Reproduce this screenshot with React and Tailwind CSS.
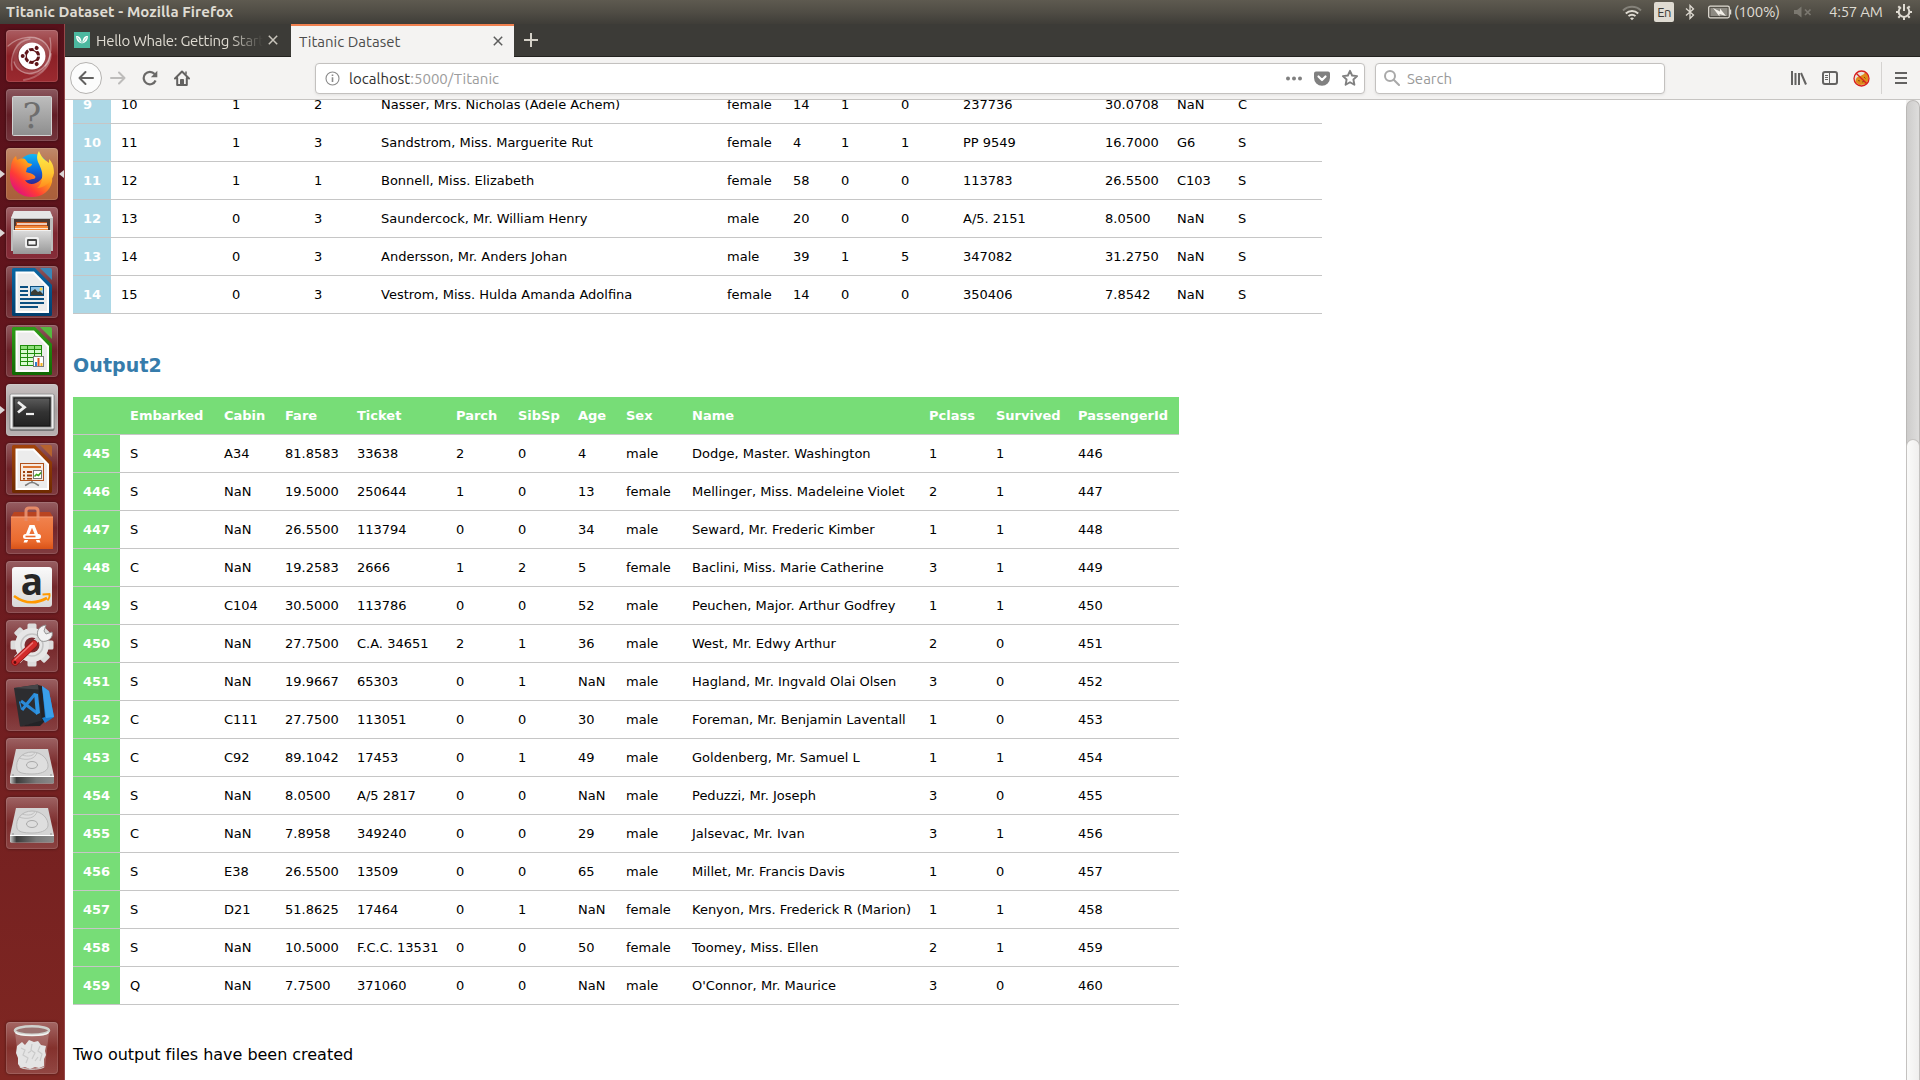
import React from "react";

const UI = "font-['Ubuntu','Noto_Sans',sans-serif]";

/* ---------- launcher icons (52 x 52 tiles) ---------- */

const UbuntuIcon = () => (
  <svg viewBox="0 0 52 52" className="size-full">
    <g fill="none" stroke="#fff" strokeLinecap="round">
      <path d="M2 16C13 6 30 4 39 13c7 7 6 17 0 23" strokeOpacity=".35" strokeWidth="1.3" />
      <path d="M6 40C4 26 9 11 24 9" strokeOpacity=".3" strokeWidth="1.5" />
      <path d="M44 8c3 16-2 32-17 35-8 2-17-3-19-11" strokeOpacity=".35" strokeWidth="1.3" />
      <path d="M18 50c14-2 26-12 27-26" strokeOpacity=".25" strokeWidth="2" />
    </g>
    <circle cx="26" cy="26" r="19" fill="#fff" fillOpacity=".14" />
    <circle cx="25.5" cy="26.5" r="14" fill="#400" fillOpacity=".35" />
    <circle cx="26" cy="26" r="13.5" fill="#fff" />
    <circle cx="26" cy="26" r="6.6" fill="none" stroke="#5e1418" strokeWidth="3" />
    {[60, 180, 300].map((a) => (
      <g key={a} transform={`rotate(${a} 26 26)`}>
        <circle cx="35.3" cy="26" r="3.1" fill="#fff" />
        <circle cx="35.3" cy="26" r="2" fill="#5e1418" />
      </g>
    ))}
    {[0, 120, 240].map((a) => (
      <path key={a} transform={`rotate(${a} 26 26)`} d="M30 26h6" stroke="#fff" strokeWidth="1.2" />
    ))}
  </svg>
);

const UnknownIcon = () => (
  <svg viewBox="0 0 52 52" className="size-full">
    <defs>
      <linearGradient id="unk" x1="0" y1="0" x2="0" y2="1">
        <stop offset="0" stopColor="#bdbdbd" />
        <stop offset="1" stopColor="#8e8e8e" />
      </linearGradient>
    </defs>
    <rect x="6.5" y="7.5" width="39" height="39" rx="1" fill="url(#unk)" stroke="#d2d2d2" />
    <text x="26" y="39" textAnchor="middle" fontSize="35" fill="#6e6e6e" className="font-['DejaVu_Serif',serif]">?</text>
  </svg>
);

const FirefoxIcon = () => (
  <svg viewBox="0 0 52 52" className="size-full">
    <defs>
      <linearGradient id="ffa" x1=".85" y1=".1" x2=".15" y2=".9">
        <stop offset="0" stopColor="#ffe83c" />
        <stop offset=".35" stopColor="#ff9a1a" />
        <stop offset=".7" stopColor="#ff3b36" />
        <stop offset="1" stopColor="#e0117f" />
      </linearGradient>
      <linearGradient id="ffb" x1=".5" y1="0" x2=".5" y2="1">
        <stop offset="0" stopColor="#12b9f5" />
        <stop offset=".5" stopColor="#0a6be0" />
        <stop offset="1" stopColor="#3a1b86" />
      </linearGradient>
      <linearGradient id="ffc" x1=".5" y1="0" x2=".5" y2="1">
        <stop offset="0" stopColor="#fff04a" />
        <stop offset=".6" stopColor="#ffc531" />
        <stop offset="1" stopColor="#ff8a1c" />
      </linearGradient>
    </defs>
    <circle cx="27" cy="22" r="16" fill="url(#ffb)" />
    <path d="M5 20c0-5 2-10 5-12l1 4c2-1 5-2 8-1l3 4 4 1c0 2-3 3-5 4l-1 4c3 1 6 1 9 4 1 1 0 3-2 3-3 0-4 2-8 1 2 4 7 5 11 3 7-3 10-10 7-18 7 4 10 12 9 17-2 9-10 15-20 15C12 49 3 38 4 27c0-3 0-5 1-7z" fill="url(#ffa)" />
    <path d="M33 3c-3 5-2 9 0 13 2 5 4 8 3 14 0 4-2 8-5 10 8 0 16-7 17-15 0-7-2-11-5-14l0 4c-4-3-8-6-10-12z" fill="url(#ffc)" />
  </svg>
);

const FilesIcon = () => (
  <svg viewBox="0 0 52 52" className="size-full">
    <defs>
      <linearGradient id="cab" x1="0" y1="0" x2="0" y2="1">
        <stop offset="0" stopColor="#dcdcdc" />
        <stop offset="1" stopColor="#989898" />
      </linearGradient>
    </defs>
    <path d="M8 4h36l3 7v33H5V11z" fill="#bdbdbd" />
    <path d="M8 4h36l3 7H5z" fill="#e6e6e6" />
    <path d="M8 12h36v11H8z" fill="#4a3a34" />
    <path d="M10 15h31v8H10z" fill="#c8571a" />
    <path d="M9 19h33v5H9z" fill="#f28a3a" />
    <path d="M11 17h30" stroke="#fff" strokeWidth="1.4" />
    <path d="M9 21.5h33" stroke="#ffe6cf" strokeWidth="1.2" />
    <path d="M7 23h38v24H7z" fill="url(#cab)" />
    <path d="M7 23.5h38" stroke="#f0f0f0" />
    <rect x="19" y="30" width="14" height="11" rx="2" fill="#f0f0f0" />
    <rect x="21" y="32" width="10" height="7" rx="1.2" fill="#444" />
    <rect x="22.5" y="34" width="7" height="3.5" fill="#f4f4f4" />
  </svg>
);

const DocIcon = ({ dark, mid, light, id, children }) => (
  <svg viewBox="0 0 52 52" className="size-full">
    <defs>
      <linearGradient id={id} x1="0" y1="0" x2="0" y2="1">
        <stop offset="0" stopColor={mid} />
        <stop offset="1" stopColor={dark} />
      </linearGradient>
    </defs>
    <path d="M7.500 2H29L46 19v29.500a1.500 1.500 0 0 1-1.500 1.500h-37A1.500 1.500 0 0 1 6 48.500v-45A1.500 1.500 0 0 1 7.500 2z" fill={`url(#${id})`} />
    <path d="M9.500 5.500H28L43 21v26H9.500z" fill="#fff" />
    <path d="M11.500 7.500H27L41 22v23H11.500z" fill="#ececec" />
    <path d="M34 2h10a2 2 0 0 1 2 2v10z" fill={light} />
    {children}
  </svg>
);

const WriterIcon = () => (
  <DocIcon id="wr" dark="#013e6d" mid="#0a67a3" light="#3b86b5">
    <g fill="#0b4f80">
      <path d="M14 20h8v2h-8zM14 24h8v2h-8zM14 28h8v2h-8zM14 32h24v2H14zM14 36h24v2H14zM14 40h18v2H14z" />
      <rect x="24" y="20" width="14" height="10" />
    </g>
    <rect x="25" y="21" width="12" height="8" fill="#8ec3e6" />
    <path d="M25 29v-3l4-3 3 3 2-1 3 3v1z" fill="#3c3c34" />
    <circle cx="35" cy="23" r="1.5" fill="#ffd33c" />
  </DocIcon>
);

const CalcIcon = () => (
  <DocIcon id="ca" dark="#106802" mid="#2f9c18" light="#55b83f">
    <rect x="14" y="20" width="22" height="21" fill="#1e8c0c" />
    {[0, 1, 2, 3, 4].map((r) =>
      [0, 1, 2].map((c) => (
        <rect key={`${r}-${c}`} x={15 + c * 7} y={21 + r * 4} width="6" height="3" fill={r === 0 ? "#8fe07c" : "#d8fbd0"} />
      ))
    )}
    <rect x="27.500" y="31.500" width="10" height="10" fill="#fff" stroke="#7a7a7a" />
    <path d="M29 37h2v4h-2z" fill="#2f7fd0" />
    <path d="M31.500 33h2v8h-2z" fill="#e2571c" />
    <path d="M34.500 38h2v3h-2z" fill="#f3b21b" />
  </DocIcon>
);

const ImpressIcon = () => (
  <DocIcon id="im" dark="#6e2a00" mid="#a3430b" light="#b5622f">
    <rect x="14.500" y="20.500" width="23" height="17" fill="#f7e9df" stroke="#b0511b" />
    <path d="M17 23h18v2H17z" fill="#d9722f" />
    <path d="M17 28h2v2h-2zM17 31.500h2v2h-2zM17 35h2v1.500h-2zM21 28h5v2h-5zM21 31.500h5v2h-5zM21 35h5v1.500h-5z" fill="#9c3f0c" />
    <rect x="27.500" y="27.500" width="8" height="8" fill="#fff" stroke="#777" />
    <path d="M28.500 33.500l2-2 2 1 2.500-3" stroke="#3aa51d" strokeWidth="1.500" fill="none" />
    <path d="M26 38v2M19 42.500c3-1 3-3 7-3s4 2 7 3" stroke="#7d7d7d" strokeWidth="1.600" fill="none" />
  </DocIcon>
);

const TerminalIcon = () => (
  <svg viewBox="0 0 52 52" className="size-full">
    <defs>
      <linearGradient id="term" x1="0" y1="0" x2="0" y2="1">
        <stop offset="0" stopColor="#5a5a5a" />
        <stop offset=".5" stopColor="#333" />
        <stop offset="1" stopColor="#232323" />
      </linearGradient>
    </defs>
    <rect x="3.500" y="10" width="45" height="37" rx="2" fill="#777" />
    <rect x="4" y="10" width="44" height="35" rx="1.500" fill="#f0f0f0" stroke="#999" />
    <rect x="7" y="13" width="38" height="30" fill="#111" stroke="#777" />
    <rect x="8.500" y="14.500" width="35" height="27" fill="url(#term)" />
    <path d="M12 18l6.500 5.200L12 28.500" fill="none" stroke="#eee" strokeWidth="2.800" />
    <path d="M20 30h8" stroke="#eee" strokeWidth="2.200" />
  </svg>
);

const SoftwareIcon = () => (
  <svg viewBox="0 0 52 52" className="size-full">
    <defs>
      <linearGradient id="bag" x1="0" y1="0" x2="0" y2="1">
        <stop offset="0" stopColor="#f0824e" />
        <stop offset=".75" stopColor="#ea6a2e" />
        <stop offset="1" stopColor="#d95318" />
      </linearGradient>
    </defs>
    <path d="M8 10h36l3 5H5z" fill="#b94420" />
    <path d="M5 15h42v32H5z" fill="url(#bag)" />
    <path d="M20 19V9q0-3 3-3h6q3 0 3 3v10" fill="none" stroke="#e58a68" strokeWidth="3" />
    <path d="M5 15h42" stroke="#f5a07a" />
    <path d="M23.500 23h5l3.500 9h-3.400L26 25.800 23.400 32H20zM18.500 38h3.600l-1 2.500h-3.600zM30 38h3.500l1 2.500h-3.600z" fill="#fff" />
    <rect x="17" y="32" width="18" height="5" rx="2.500" fill="#fff" />
    <path d="M19.500 34.500h10" stroke="#ea6a2e" strokeWidth="1.600" />
  </svg>
);

const AmazonIcon = () => (
  <svg viewBox="0 0 52 52" className="size-full">
    <defs>
      <linearGradient id="amz" x1="0" y1="0" x2="0" y2="1">
        <stop offset="0" stopColor="#fafafa" />
        <stop offset="1" stopColor="#d9d9d9" />
      </linearGradient>
    </defs>
    <rect x="6" y="6" width="40" height="40" rx="3" fill="url(#amz)" />
    <text x="26" y="33.500" textAnchor="middle" fontSize="37" fontWeight="700" fill="#262626" className="font-['Open_Sans',sans-serif]">a</text>
    <path d="M8 35c11 8 23 7.500 33 2" fill="none" stroke="#f90" strokeWidth="2.600" />
    <path d="M36.500 33.500l7-.5c.5 2-.8 5-2 6.500" fill="none" stroke="#f90" strokeWidth="1.800" />
  </svg>
);

const SettingsIcon = () => (
  <svg viewBox="0 0 52 52" className="size-full">
    {[0, 45, 90, 135].map((a) => (
      <rect key={a} x="21.500" y="3.500" width="9" height="43" rx="1.500" fill="#dcdcdc" transform={`rotate(${a} 26 25)`} />
    ))}
    <circle cx="26" cy="25" r="17" fill="#e6e6e6" />
    <circle cx="26" cy="25" r="11" fill="none" stroke="#c4c4c4" strokeWidth="1.500" />
    <circle cx="26" cy="25" r="7.500" fill="#7c2c30" />
    <path d="M29 22l7-7" stroke="#d6d6d6" strokeWidth="5" />
    <path d="M32 17c-2-6 1-11 8-12l-2 6 2 3 6-2c2 5-4 11-11 9z" fill="#f2f2f2" stroke="#8d8d8d" strokeWidth=".9" />
    <path d="M9 42l19-18" stroke="#8e1515" strokeWidth="7.500" strokeLinecap="round" />
    <path d="M9 42l19-18" stroke="#d22c2c" strokeWidth="6" strokeLinecap="round" />
    <path d="M9 39.500l17.500-16.500" stroke="#ef7b7b" strokeWidth="1.400" strokeLinecap="round" />
    <circle cx="9" cy="42.500" r="1.400" fill="#5c0c0c" />
  </svg>
);

const CodeIcon = () => (
  <svg viewBox="0 0 52 52" className="size-full">
    <path d="M8 9l24-3.500 6 36.500-24 5.500z" fill="#2d2d30" />
    <path d="M8 9l24-3.500 1 5z" fill="#454548" />
    <path d="M32 6l4 1 6 32-8 8-20 .5 22-6z" fill="#232326" />
    <path d="M36 7l7 5 5 26-9 6-3-5 3-1z" fill="#1b7fd0" />
    <path d="M36 7l4 32 8-1-5-26z" fill="#3ba0ea" />
    <path d="M15 22l16 12M16 31l13-16" stroke="#2a8ad8" strokeWidth="3" />
    <path d="M28 14l4 1 2 19-4 2z" fill="#2f95e2" />
    <path d="M13.500 22.500l2 8" stroke="#2a8ad8" strokeWidth="1.200" />
  </svg>
);

const DiskIcon = ({ id }) => (
  <svg viewBox="0 0 52 52" className="size-full">
    <defs>
      <linearGradient id={id} x1="0" y1="0" x2="1" y2="0">
        <stop offset="0" stopColor="#c9c9c9" />
        <stop offset=".15" stopColor="#3a3a3a" />
        <stop offset=".6" stopColor="#777" />
        <stop offset="1" stopColor="#8a8a8a" />
      </linearGradient>
    </defs>
    <path d="M10 11h32l6 27v6a1.500 1.500 0 0 1-1.500 1.500h-41A1.500 1.500 0 0 1 4 44v-6z" fill="#d4d4d4" />
    <path d="M4 38.500h44V44a1.500 1.500 0 0 1-1.500 1.500h-41A1.500 1.500 0 0 1 4 44z" fill={`url(#${id})`} />
    <path d="M4 38.500h44" stroke="#fff" />
    <path d="M11 31c-2-9 5-17 15-17s17 8 16 15c-1 5-8 7-16 7s-14-1-15-5z" fill="#dedede" stroke="#b8b8b8" />
    <path d="M16 17c6 2 12 1 13-3M13 20c8 3 17 1 18-6" stroke="#c0c0c0" fill="none" />
    <ellipse cx="26" cy="27" rx="5.500" ry="3.500" fill="#dedede" stroke="#a8a8a8" />
    <circle cx="7" cy="37" r=".8" fill="#888" />
    <circle cx="45" cy="37" r=".8" fill="#888" />
  </svg>
);

const TrashIcon = () => (
  <svg viewBox="0 0 52 52" className="size-full">
    <path d="M9 10l4 35c1 3 25 3 26 0l4-35z" fill="#fff" fillOpacity=".2" />
    <path d="M11 24l5-4 3 3 4-5 5 2 4-1 3 4 5 1-1 5 1 4-2 4v7l-5 2-4-1-5 2-5-2-4 1-3-4v-6l-2-5z" fill="#e4e4e4" />
    <path d="M15 26l4 2-2 5 5 3-2 5M26 22l-1 6 4 3-3 6M34 24l-2 5 4 3-2 7M22 31l3-2M29 39l3-4" stroke="#cacaca" strokeWidth="1.200" fill="none" />
    <path d="M14 45c4 3 20 3 24 0" stroke="#d5d5d5" fill="none" />
    <ellipse cx="26" cy="8.500" rx="17" ry="4.200" fill="#9b7371" stroke="#cfd1cd" strokeWidth="2.600" />
    <path d="M9.500 10.500c4 4 29 4 33 0" stroke="#f4f4f2" strokeWidth="1.400" fill="none" />
  </svg>
);

const LAUNCHER = [
  { icon: <UbuntuIcon />, tile: "bg-gradient-to-b from-[#ab5d62] via-[#8c2026] to-[#9b2a30]" },
  { icon: <UnknownIcon /> },
  { icon: <FirefoxIcon />, tile: "bg-gradient-to-b from-[#c08a6c] via-[#b3663c] to-[#a95f3c]", run: true, focus: true },
  { icon: <FilesIcon />, tile: "bg-gradient-to-b from-[#a1656b] via-[#7d2731] to-[#862c38]", run: true },
  { icon: <WriterIcon /> },
  { icon: <CalcIcon /> },
  { icon: <TerminalIcon />, tile: "bg-gradient-to-b from-[#c9c2c2] via-[#a8a0a0] to-[#b9b2b2]", run: true },
  { icon: <ImpressIcon /> },
  { icon: <SoftwareIcon /> },
  { icon: <AmazonIcon /> },
  { icon: <SettingsIcon /> },
  { icon: <CodeIcon /> },
  { icon: <DiskIcon id="disk1" /> },
  { icon: <DiskIcon id="disk2" /> },
];

const Tile = ({ item }) => (
  <div className="relative h-[52px] w-16 shrink-0 px-1.5">
    {item.run && (
      <span className="absolute left-0 top-[22px] size-0 border-y-4 border-l-[5px] border-y-transparent border-l-[#dcd6d6]" />
    )}
    {item.focus && (
      <span className="absolute right-0 top-[22px] size-0 border-y-4 border-r-[5px] border-y-transparent border-r-[#dcd6d6]" />
    )}
    <div
      className={`size-[52px] rounded-[4px] shadow-[0_0_3px_rgba(0,0,0,0.45),inset_0_0_0_1px_rgba(255,255,255,0.12)] ${
        item.tile || "bg-gradient-to-b from-white/30 via-white/5 to-white/15"
      }`}
    >
      {item.icon}
    </div>
  </div>
);

const Launcher = () => (
  <aside className="flex w-[65px] shrink-0 flex-col justify-between border-r border-[#96484a] bg-gradient-to-b from-[#57101a] via-[#6b1a1f] to-[#7f2722] pb-1.5 pt-1.5">
    <div className="flex flex-col gap-[7px]">
      {LAUNCHER.map((item, i) => (
        <Tile key={i} item={item} />
      ))}
    </div>
    <Tile item={{ icon: <TrashIcon /> }} />
  </aside>
);

/* ---------- system menu bar ---------- */

const MenuBar = () => (
  <header className={`flex h-6 shrink-0 items-center bg-gradient-to-b from-[#5e5a50] via-[#504d45] to-[#3f3d38] text-[#dfdbd2] ${UI}`}>
    <div className="w-[300px] whitespace-nowrap pl-1.5 text-[15px] font-bold leading-6 tracking-[0.08px]">Titanic Dataset - Mozilla Firefox</div>
    <div className="ml-auto flex h-6 items-center text-[15px] leading-6">
      <svg width="20" height="16" viewBox="0 0 20 16" fill="none" strokeWidth="1.900" className="mt-px">
        <path d="M1 5.500C6 .5 14 .5 19 5.500" stroke="#85827a" />
        <path d="M3.800 8.500c3.500-3.400 8.900-3.400 12.400 0M6.500 11.200c2-2 5-2 7 0" stroke="#dfdbd2" />
        <path d="M8 13.300c1.200-1 2.800-1 4 0l-2 2z" fill="#dfdbd2" />
      </svg>
      <div className="ml-3 flex h-5 w-5 items-center justify-center rounded-[2px] bg-[#dfdbd2] text-[13px] tracking-[-0.5px] text-[#3c3b37]">En</div>
      <svg width="10" height="16" viewBox="0 0 10 16" className="ml-[11px]" fill="none" stroke="#dfdbd2" strokeWidth="1.300">
        <path d="M1 4.500l7.500 6.500L5 14.500v-13L8.500 5 1 11.500" />
      </svg>
      <svg width="24" height="14" viewBox="0 0 24 14" className="ml-[13px]" fill="none">
        <rect x=".7" y="1.200" width="20.600" height="11.600" rx="1.500" stroke="#dfdbd2" strokeWidth="1.300" />
        <rect x="2.500" y="3" width="17" height="8" fill="#8d8a82" />
        <path d="M22.500 4.500v5" stroke="#dfdbd2" strokeWidth="1.500" />
        <path d="M5 3l7 3.500V3.500l6 7.500-6.500-2v2.500z" fill="#f2efe8" />
      </svg>
      <span className="ml-[2px] w-[51px] whitespace-nowrap tracking-[-0.3px]">(100%)</span>
      <svg width="18" height="12" viewBox="0 0 18 12" className="ml-[9px]" fill="#7b7870">
        <path d="M0 4h3l4.500-3.500v11L3 8H0z" />
        <path d="M11 3.500l5.500 5.500M16.500 3.500L11 9" stroke="#7b7870" strokeWidth="1.700" />
      </svg>
      <span className="ml-[17px] w-[58px] whitespace-nowrap tracking-[-0.25px]">4:57 AM</span>
      <svg width="18" height="18" viewBox="0 0 18 18" className="ml-2 mr-[7px]" fill="none" stroke="#dfdbd2">
        <path d="M6 4.300a5.300 5.300 0 1 0 6 0" strokeWidth="2" />
        <path d="M9 1v7" strokeWidth="2" />
        <path d="M1 9h2.500M14.500 9H17M3.300 3.300L5 5M14.700 3.300L13 5M3.300 14.700L5 13M14.700 14.700L13 13M9 14.500V17" strokeWidth="2" />
      </svg>
    </div>
  </header>
);

/* ---------- browser chrome ---------- */

const Cross = ({ className }) => (
  <svg width="10" height="10" viewBox="0 0 10 10" className={className} fill="none" strokeWidth="1.500">
    <path d="M.8.8l8.400 8.400M9.200.8L.8 9.200" />
  </svg>
);

const TabStrip = () => (
  <div className={`flex h-[33px] shrink-0 border-b border-[#23221f] bg-[#3c3b37] text-[15px] leading-6 ${UI}`}>
    <div className="flex w-[226px] items-center pl-[9px] text-[#dfdbd2]">
      <svg width="16" height="16" viewBox="0 0 16 16" className="shrink-0">
        <rect width="16" height="16" fill="#4cb8a0" />
        <path d="M2 4c3-.5 5.500 1.500 5.700 7.500C4 10.500 2 8 2 4zM14 4C11 3.500 8.700 5 8.300 11.500 12 10.500 14 8 14 4z" fill="#fff" />
        <path d="M3.500 5.500l3.500 5M12.500 5.500L9 10.500" stroke="#4cb8a0" strokeWidth=".6" />
      </svg>
      <div className="ml-[6px] mt-0.5 w-[167px] overflow-hidden whitespace-nowrap tracking-[-0.3px] [mask-image:linear-gradient(to_right,black_80%,transparent)]">Hello Whale: Getting Started</div>
      <Cross className="ml-[5px] shrink-0 stroke-[#c9c5bc]" />
    </div>
    <div className="-mb-px flex w-[223px] items-center border-t-2 border-[#f0804f] bg-[#f4f3f2] pl-2 text-[#4c4c4c]">
      <span className="w-[194px] whitespace-nowrap tracking-[0.03px]">Titanic Dataset</span>
      <Cross className="-mt-0.5 stroke-[#5c5c5c]" />
    </div>
    <svg width="14" height="14" viewBox="0 0 14 14" className="ml-[10px] mt-[9px]" stroke="#d5d1c8" strokeWidth="2">
      <path d="M7 0v14M0 7h14" />
    </svg>
  </div>
);

const Toolbar = () => (
  <div className={`flex h-[43px] shrink-0 items-center border-b border-[#c6c4c2] bg-[#f4f3f2] text-[15px] leading-6 ${UI}`}>
    <div className="ml-[5px] flex size-8 items-center justify-center rounded-full border border-[#b5b3b1] bg-[#fcfcfc]">
      <svg width="16" height="16" viewBox="0 0 16 16" fill="none" stroke="#636261" strokeWidth="2" strokeLinecap="round" strokeLinejoin="round">
        <path d="M15 8H1.500M7.500 2l-6 6 6 6" />
      </svg>
    </div>
    <svg width="16" height="16" viewBox="0 0 16 16" className="ml-2" fill="none" stroke="#bdbcbb" strokeWidth="2" strokeLinecap="round" strokeLinejoin="round">
      <path d="M1 8h13.500M9 2.500L14.500 8 9 13.500" />
    </svg>
    <svg width="16" height="16" viewBox="0 0 16 16" className="ml-4" fill="none" stroke="#6a6968" strokeWidth="2.200">
      <path d="M13.600 10.500A6.200 6.200 0 1 1 12.600 4" />
      <path d="M15.300.800v6.400H8.800z" fill="#6a6968" stroke="none" />
    </svg>
    <svg width="16" height="16" viewBox="0 0 16 16" className="ml-4" fill="none" stroke="#636261" strokeWidth="2" strokeLinejoin="round" strokeLinecap="round">
      <path d="M1 8.500L8 1.500l7 7M3.200 8v6.900h9.600V8" />
      <path d="M6.500 15V9.500h3V15" fill="#636261" strokeWidth="1" />
      <path d="M12 2v2" strokeWidth="1.500" />
    </svg>

    <div className="ml-[125px] flex h-[31px] w-[1050px] items-center rounded-[4px] border border-[#c3c1bf] bg-white pl-[9px] pr-[5px] shadow-[0_1px_3px_rgba(0,0,0,0.08)]">
      <svg width="15" height="15" viewBox="0 0 15 15" fill="none" stroke="#8a8a8a">
        <circle cx="7.500" cy="7.500" r="6.500" strokeWidth="1.100" />
        <path d="M7.500 6.300v4.700M7.500 3.600v1.500" strokeWidth="1.600" />
      </svg>
      <div className="ml-[9px] mt-px whitespace-nowrap tracking-[0.02px] text-[#9c9c9c]"><span className="text-[#303030]">localhost</span>:5000/Titanic</div>
      <div className="ml-auto flex items-center">
        <svg width="18" height="5" viewBox="0 0 18 5" fill="#808080">
          <circle cx="3" cy="2.500" r="2" /><circle cx="9" cy="2.500" r="2" /><circle cx="15" cy="2.500" r="2" />
        </svg>
        <svg width="16" height="15" viewBox="0 0 16 15" className="ml-[11px]">
          <path d="M2 .5h12a2 2 0 0 1 2 2v4.300a8 8 0 0 1-16 0V2.500a2 2 0 0 1 2-2z" fill="#808080" />
          <path d="M4.500 5.500L8 9l3.500-3.500" fill="none" stroke="#fff" strokeWidth="2.200" strokeLinecap="round" strokeLinejoin="round" />
        </svg>
        <svg width="18" height="18" viewBox="0 0 18 18" className="ml-[11px]" fill="none" stroke="#808080" strokeWidth="1.900" strokeLinejoin="round">
          <path d="M9 1.800l2.100 4.700 5 .6-3.700 3.400 1 5.300L9 13.200l-4.400 2.600 1-5.300L1.900 7.100l5-.6z" />
        </svg>
      </div>
    </div>

    <div className="ml-2.5 flex h-[31px] w-[290px] items-center rounded-[4px] border border-[#c3c1bf] bg-white pl-[8px] shadow-[0_1px_3px_rgba(0,0,0,0.08)]">
      <svg width="16" height="16" viewBox="0 0 16 16" fill="none" stroke="#a9a9a9" strokeWidth="2">
        <circle cx="6" cy="6" r="5" />
        <path d="M9.700 9.700L15 15" strokeLinecap="round" />
      </svg>
      <span className="ml-[7px] mt-px text-[#9a9a9a]">Search</span>
    </div>

    <div className="ml-auto flex items-center">
      <svg width="16" height="14" viewBox="0 0 16 14" stroke="#636261" strokeWidth="2" fill="none">
        <path d="M1 0v14M4.500 2v12M8 2v12" />
        <path d="M10 2l5 11.500" />
      </svg>
      <svg width="16" height="14" viewBox="0 0 16 14" className="ml-[15px]" fill="none" stroke="#636261">
        <rect x="1" y="1" width="14" height="12" rx="2" strokeWidth="2" />
        <path d="M7.500 1v12" strokeWidth="1" />
        <path d="M3 4.500h3M3 6.500h3M3 8.500h3" />
      </svg>
      <svg width="17" height="17" viewBox="0 0 17 17" className="ml-[15px]">
        <circle cx="8.500" cy="8.500" r="7.500" fill="#e9e2da" />
        <path d="M2.500 12c0-4 2-5.500 4-5.500L11 4l1.500-2.500L15 5.500l.5 4-2.500 5-7 .5z" fill="#e08a1b" />
        <path d="M5 10.500l2 .5M11 7l1.500 1.500M9 12l2-.5" stroke="#8a4a10" />
        <circle cx="8.500" cy="8.500" r="7.500" fill="none" stroke="#d81e1e" strokeWidth="1.300" />
        <path d="M3.200 3.200l10.600 10.600" stroke="#d81e1e" strokeWidth="1.300" />
      </svg>
      <div className="ml-[11px] h-8 w-px bg-[#d5d3d1]" />
      <svg width="12" height="12" viewBox="0 0 12 12" className="ml-[13px] mr-[13px]" fill="#636261">
        <path d="M0 0h12v2H0zM0 5h12v2H0zM0 10h12v2H0z" />
      </svg>
    </div>
  </div>
);

/* ---------- page content ---------- */

const COLS_1 = [38, 111, 82, 67, 346, 66, 48, 60, 62, 142, 72, 61, 94];
const ROWS_1 = [
  ["9", "10", "1", "2", "Nasser, Mrs. Nicholas (Adele Achem)", "female", "14", "1", "0", "237736", "30.0708", "NaN", "C"],
  ["10", "11", "1", "3", "Sandstrom, Miss. Marguerite Rut", "female", "4", "1", "1", "PP 9549", "16.7000", "G6", "S"],
  ["11", "12", "1", "1", "Bonnell, Miss. Elizabeth", "female", "58", "0", "0", "113783", "26.5500", "C103", "S"],
  ["12", "13", "0", "3", "Saundercock, Mr. William Henry", "male", "20", "0", "0", "A/5. 2151", "8.0500", "NaN", "S"],
  ["13", "14", "0", "3", "Andersson, Mr. Anders Johan", "male", "39", "1", "5", "347082", "31.2750", "NaN", "S"],
  ["14", "15", "0", "3", "Vestrom, Miss. Hulda Amanda Adolfina", "female", "14", "0", "0", "350406", "7.8542", "NaN", "S"],
];

const COLS_2 = [47, 94, 61, 72, 99, 62, 60, 48, 66, 237, 67, 82, 111];
const HEAD_2 = ["", "Embarked", "Cabin", "Fare", "Ticket", "Parch", "SibSp", "Age", "Sex", "Name", "Pclass", "Survived", "PassengerId"];
const ROWS_2 = [
  ["445", "S", "A34", "81.8583", "33638", "2", "0", "4", "male", "Dodge, Master. Washington", "1", "1", "446"],
  ["446", "S", "NaN", "19.5000", "250644", "1", "0", "13", "female", "Mellinger, Miss. Madeleine Violet", "2", "1", "447"],
  ["447", "S", "NaN", "26.5500", "113794", "0", "0", "34", "male", "Seward, Mr. Frederic Kimber", "1", "1", "448"],
  ["448", "C", "NaN", "19.2583", "2666", "1", "2", "5", "female", "Baclini, Miss. Marie Catherine", "3", "1", "449"],
  ["449", "S", "C104", "30.5000", "113786", "0", "0", "52", "male", "Peuchen, Major. Arthur Godfrey", "1", "1", "450"],
  ["450", "S", "NaN", "27.7500", "C.A. 34651", "2", "1", "36", "male", "West, Mr. Edwy Arthur", "2", "0", "451"],
  ["451", "S", "NaN", "19.9667", "65303", "0", "1", "NaN", "male", "Hagland, Mr. Ingvald Olai Olsen", "3", "0", "452"],
  ["452", "C", "C111", "27.7500", "113051", "0", "0", "30", "male", "Foreman, Mr. Benjamin Laventall", "1", "0", "453"],
  ["453", "C", "C92", "89.1042", "17453", "0", "1", "49", "male", "Goldenberg, Mr. Samuel L", "1", "1", "454"],
  ["454", "S", "NaN", "8.0500", "A/5 2817", "0", "0", "NaN", "male", "Peduzzi, Mr. Joseph", "3", "0", "455"],
  ["455", "C", "NaN", "7.8958", "349240", "0", "0", "29", "male", "Jalsevac, Mr. Ivan", "3", "1", "456"],
  ["456", "S", "E38", "26.5500", "13509", "0", "0", "65", "male", "Millet, Mr. Francis Davis", "1", "0", "457"],
  ["457", "S", "D21", "51.8625", "17464", "0", "1", "NaN", "female", "Kenyon, Mrs. Frederick R (Marion)", "1", "1", "458"],
  ["458", "S", "NaN", "10.5000", "F.C.C. 13531", "0", "0", "50", "female", "Toomey, Miss. Ellen", "2", "1", "459"],
  ["459", "Q", "NaN", "7.7500", "371060", "0", "0", "NaN", "male", "O'Connor, Mr. Maurice", "3", "0", "460"],
];

const DataTable = ({ cols, head, rows, accent }) => (
  <table className="table-fixed border-separate border-spacing-0 text-left text-[13px] leading-[17px]" style={{ width: cols.reduce((a, b) => a + b, 0) }}>
    <colgroup>
      {cols.map((w, i) => (
        <col key={i} style={{ width: w }} />
      ))}
    </colgroup>
    {head && (
      <thead>
        <tr className={`h-[38px] text-white ${accent}`}>
          {head.map((h, i) => (
            <th key={i} className="whitespace-nowrap border-b border-[#c6c6c6] py-0 pl-2.5 font-bold">{h}</th>
          ))}
        </tr>
      </thead>
    )}
    <tbody>
      {rows.map((r) => (
        <tr key={r[0]} className="h-[38px]">
          {r.map((c, i) =>
            i === 0 ? (
              <th key={i} className={`border-b border-[#c6c6c6] py-0 pl-2.5 font-bold text-white ${accent}`}>{c}</th>
            ) : (
              <td key={i} className="whitespace-nowrap border-b border-[#c6c6c6] py-0 pl-2.5">{c}</td>
            )
          )}
        </tr>
      ))}
    </tbody>
  </table>
);

const Page = () => (
  <div className="flex min-h-0 flex-1 bg-white">
    <main className="min-w-0 flex-1 overflow-hidden pl-2 font-['DejaVu_Sans',sans-serif] text-black">
      <div className="-mt-3.5">
        <DataTable cols={COLS_1} rows={ROWS_1} accent="bg-[#add8e6]" />
      </div>
      <h3 className="mb-5 mt-10 text-[19px] font-bold leading-[23px] tracking-[0.1px] text-[#367cab]">Output2</h3>
      <DataTable cols={COLS_2} head={HEAD_2} rows={ROWS_2} accent="bg-[#77dd77]" />
      <p className="mt-10 text-base leading-[19px] tracking-[-0.03px]">Two output files have been created</p>
    </main>
    <div className="flex w-3.5 shrink-0 flex-col bg-[#f2f1f0]">
      <div className="-mb-3 h-[351px] shrink-0 rounded-t-[7px] border border-b-0 border-[#bab8b6] bg-gradient-to-r from-[#cdcccb] to-[#dedddc]" />
      <div className="flex-1 rounded-t-[7px] border-x border-t border-[#c4c2c0] bg-gradient-to-r from-[#fafaf9] to-[#f0efee]" />
    </div>
  </div>
);

export default function App() {
  return (
    <div className="flex h-[1080px] w-[1920px] flex-col overflow-hidden">
      <MenuBar />
      <div className="flex min-h-0 flex-1">
        <Launcher />
        <div className="flex min-w-0 flex-1 flex-col">
          <TabStrip />
          <Toolbar />
          <Page />
        </div>
      </div>
    </div>
  );
}
